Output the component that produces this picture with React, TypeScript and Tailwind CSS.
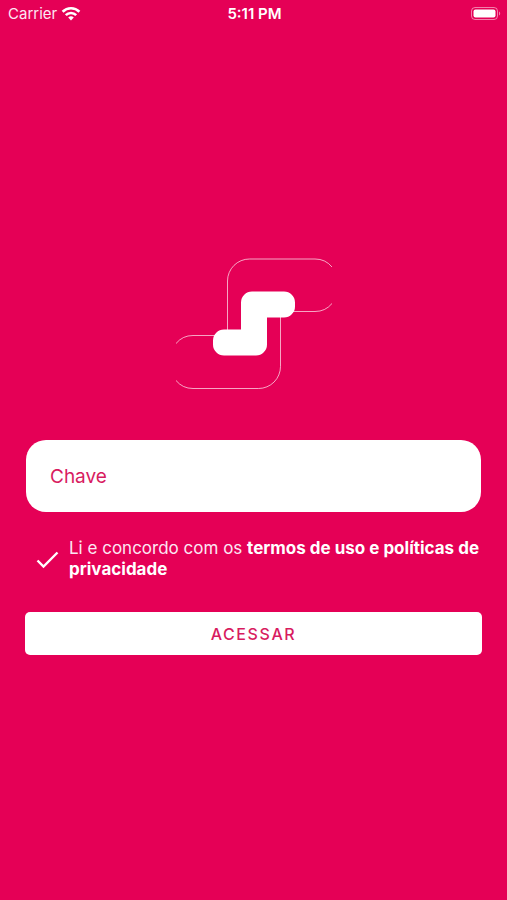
import React, { useState } from "react";

const StatusBar = () => (
  <header className="grid grid-cols-3 items-center h-7 pl-2 pr-1.5 text-[15px] text-white">
    <div className="flex items-center gap-1">
      <span className="text-pink-100">Carrier</span>
      <svg className="w-5 h-4" viewBox="0 0 20 16" fill="none" stroke="currentColor" strokeWidth="2.6" aria-hidden="true">
        <path d="M1.6 5.700a12 12 0 0 1 16.8 0" />
        <path d="M4.8 9.100a7.4 7.4 0 0 1 10.4 0" />
        <path d="M10 14.500 7.2 11.600a4 4 0 0 1 5.6 0z" fill="currentColor" stroke="none" />
      </svg>
    </div>
    <span className="text-center font-semibold">5:11 PM</span>
    <svg className="w-8 h-4 justify-self-end" viewBox="0 0 32 16" aria-label="Bateria">
      <rect x="2.5" y="1.5" width="26" height="12" rx="3.5" fill="none" stroke="#fff" strokeOpacity="0.5" />
      <rect x="4.5" y="3.5" width="22" height="8" rx="2" fill="#fff" />
      <path d="M30 5.5c1.6.6 1.6 3.4 0 4z" fill="#fff" fillOpacity="0.5" />
    </svg>
  </header>
);

const Logo = () => (
  <svg className="w-[158px] h-[132px] mx-auto" viewBox="0 0 158 132" fill="none" aria-label="Logo">
    <g stroke="#fff" strokeOpacity="0.65">
      <path d="M52.5 74V23a22 22 0 0 1 22-22H140a22 22 0 0 1 17 8" />
      <path d="M118 53.5h22a22 22 0 0 0 17-8" />
      <path d="M105.5 58v50.500a22 22 0 0 1-22 22H18a22 22 0 0 1-17-8" />
      <path d="M40 77.500H18a22 22 0 0 0-17 8" />
    </g>
    <path
      fill="#fff"
      d="M77 33.500h32a11 11 0 0 1 11 11v4a11 11 0 0 1-11 11H92v27a11 11 0 0 1-11 11H49a11 11 0 0 1-11-11v-4a11 11 0 0 1 11-11h17v-27a11 11 0 0 1 11-11z"
    />
  </svg>
);

const App = () => {
  const [chave, setChave] = useState("");
  const [aceito, setAceito] = useState(true);

  return (
    <div className="min-h-screen flex flex-col bg-[#e50056] font-[Inter,sans-serif]">
      <StatusBar />
      <main className="flex-1 flex flex-col justify-center px-[25px] pb-[15px]">
        <Logo />
        <form className="mt-[50px] flex flex-col" onSubmit={(e) => e.preventDefault()}>
          <input
            type="text"
            aria-label="Chave"
            placeholder="Chave"
            value={chave}
            onChange={(e) => setChave(e.target.value)}
            className="h-[72px] mx-px px-6 rounded-[20px] bg-white text-[19px] text-[#d81b60] placeholder:text-[#d81b60] outline-none"
          />
          <div className="mt-[26px] flex items-center">
            <span className="relative w-6 h-6 ml-2.5 mr-2.5 shrink-0">
              <input
                id="termos"
                type="checkbox"
                checked={aceito}
                onChange={(e) => setAceito(e.target.checked)}
                className="peer appearance-none block w-6 h-6 cursor-pointer"
              />
              <svg
                className="absolute inset-0 w-6 h-6 text-white pointer-events-none invisible peer-checked:visible"
                viewBox="0 0 24 24"
                fill="none"
                stroke="currentColor"
                strokeWidth="2.4"
                aria-hidden="true"
              >
                <path d="M2.500 13.500 8.500 19.500 22.500 5.500" />
              </svg>
            </span>
            <label htmlFor="termos" className="text-[17px] leading-[21px] text-pink-100">
              Li e concordo com os <strong className="font-bold text-white">termos de uso e políticas de privacidade</strong>
            </label>
          </div>
          <button
            type="submit"
            className="mt-8 h-[43px] rounded-[5px] bg-white text-base font-medium tracking-widest text-[#d81b60] cursor-pointer"
          >
            ACESSAR
          </button>
        </form>
      </main>
    </div>
  );
};

export default App;
